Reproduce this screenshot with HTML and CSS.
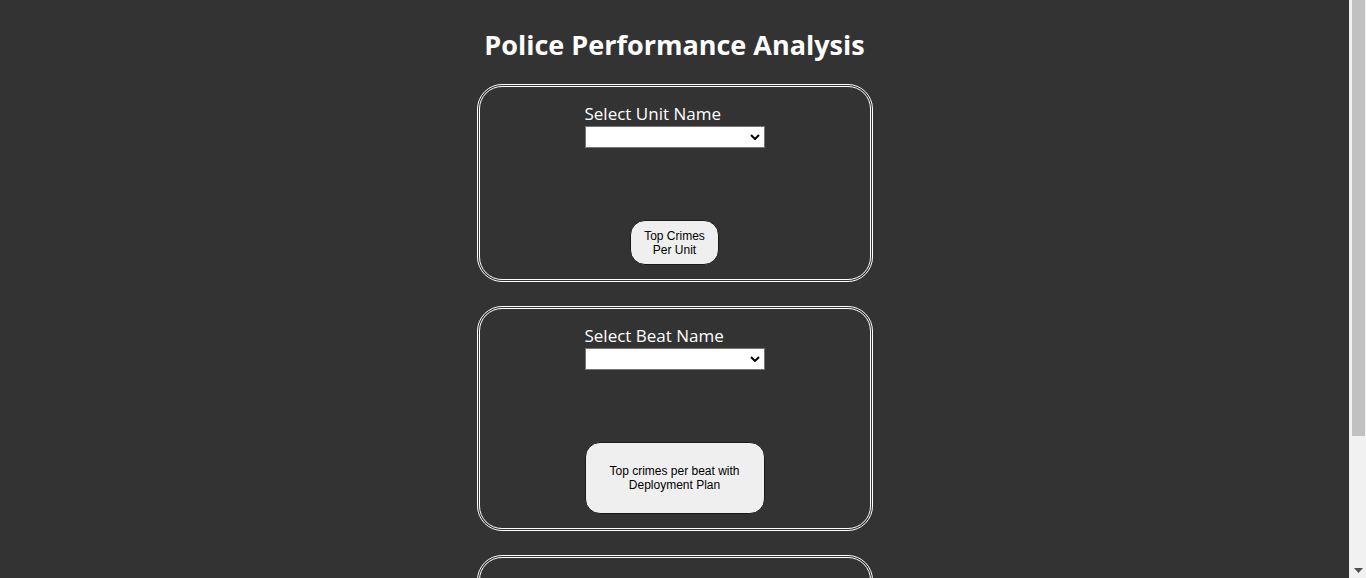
FILE: index.html
```html
<!DOCTYPE html>
<html lang="en">
<head>
<meta charset="utf-8">
<title>Police Performance Analysis</title>
<link rel="stylesheet" href="styles.css">
</head>
<body>
<div class="viewport">
<main class="page">
  <h1 class="title">Police Performance Analysis</h1>

  <section class="card">
    <div class="field">
      <label class="field-label" for="unit">Select Unit Name</label>
      <div class="select-wrap">
        <select id="unit" class="select"></select>
        <svg class="chevron" width="10" height="6" viewBox="0 0 10 6"><path d="M1 1 L5 5 L9 1" fill="none" stroke="#000" stroke-width="2"/></svg>
      </div>
    </div>
    <div class="actions">
      <button class="btn btn-small" type="button">Top Crimes Per Unit</button>
    </div>
  </section>

  <section class="card">
    <div class="field">
      <label class="field-label" for="beat">Select Beat Name</label>
      <div class="select-wrap">
        <select id="beat" class="select"></select>
        <svg class="chevron" width="10" height="6" viewBox="0 0 10 6"><path d="M1 1 L5 5 L9 1" fill="none" stroke="#000" stroke-width="2"/></svg>
      </div>
    </div>
    <div class="actions">
      <button class="btn btn-wide" type="button">Top crimes per beat with Deployment Plan</button>
    </div>
  </section>

  <section class="card">
    <div class="field">
      <label class="field-label" for="crime">Crime Type</label>
      <div class="select-wrap">
        <select id="crime" class="select"></select>
        <svg class="chevron" width="10" height="6" viewBox="0 0 10 6"><path d="M1 1 L5 5 L9 1" fill="none" stroke="#000" stroke-width="2"/></svg>
      </div>
    </div>
    <div class="actions">
      <button class="btn btn-small" type="button">Top Crimes</button>
    </div>
  </section>
</main>
<div class="scrollbar" aria-hidden="true">
  <div class="scroll-thumb"></div>
  <div class="scroll-track"></div>
  <svg class="scroll-arrow" width="9" height="5" viewBox="0 0 9 5"><path d="M0 0 H9 L4.5 5 Z" fill="#505050"/></svg>
</div>
</div>
</body>
</html>
```

FILE: styles.css
```css
html, body {
  margin: 0;
  padding: 0;
  background: #333333;
  overflow: hidden;
}

body {
  font-family: "Open Sans", "Noto Sans", sans-serif;
  color: #ffffff;
}

.viewport {
  display: flex;
  height: 100vh;
  overflow: hidden;
}

.page {
  flex: 1;
  display: flex;
  flex-direction: column;
  align-items: center;
  gap: 24px;
  padding-bottom: 24px;
}

.scrollbar {
  width: 17px;
  flex: 0 0 17px;
  height: 100vh;
  background: #f1f1f1;
  display: flex;
  flex-direction: column;
  align-items: center;
}

.scroll-thumb {
  width: 13px;
  height: 436px;
  background: #c1c1c1;
  margin-left: 1px;
}

.scroll-track {
  flex: 1;
}

.scroll-arrow {
  display: block;
  margin: 0 0 5px 1px;
}

.title {
  margin: 29px 0 -1px;
  font-size: 27px;
  line-height: 32px;
  font-weight: 700;
  color: #ffffff;
}

.card {
  box-sizing: border-box;
  width: 396px;
  border: 3px double #ffffff;
  border-radius: 25px;
  padding: 14px 0;
  display: flex;
  flex-direction: column;
  align-items: center;
}

.field {
  width: 180px;
  display: flex;
  flex-direction: column;
}

.field-label {
  font-size: 17px;
  line-height: 25px;
  color: #ffffff;
}

.select-wrap {
  position: relative;
  height: 22px;
}

.select {
  display: block;
  box-sizing: border-box;
  width: 180px;
  height: 22px;
  margin: 0;
  border: 1px solid #767676;
  border-radius: 0;
  background: #ffffff;
  -webkit-appearance: none;
  appearance: none;
}

.chevron {
  position: absolute;
  right: 5px;
  top: 8px;
  pointer-events: none;
}

.actions {
  margin-top: 72px;
  display: flex;
  justify-content: center;
}

.btn {
  box-sizing: border-box;
  margin: 0;
  padding: 0 4px;
  background: #efefef;
  border: 1px solid #1a1a1a;
  border-radius: 15px;
  font-family: "Liberation Sans", Arial, sans-serif;
  font-size: 12px;
  line-height: 14px;
  color: #000000;
}

.btn-small {
  width: 89px;
  height: 45px;
  padding: 0 12px;
}

.btn-wide {
  width: 180px;
  height: 72px;
  padding: 0 20px;
}
```
